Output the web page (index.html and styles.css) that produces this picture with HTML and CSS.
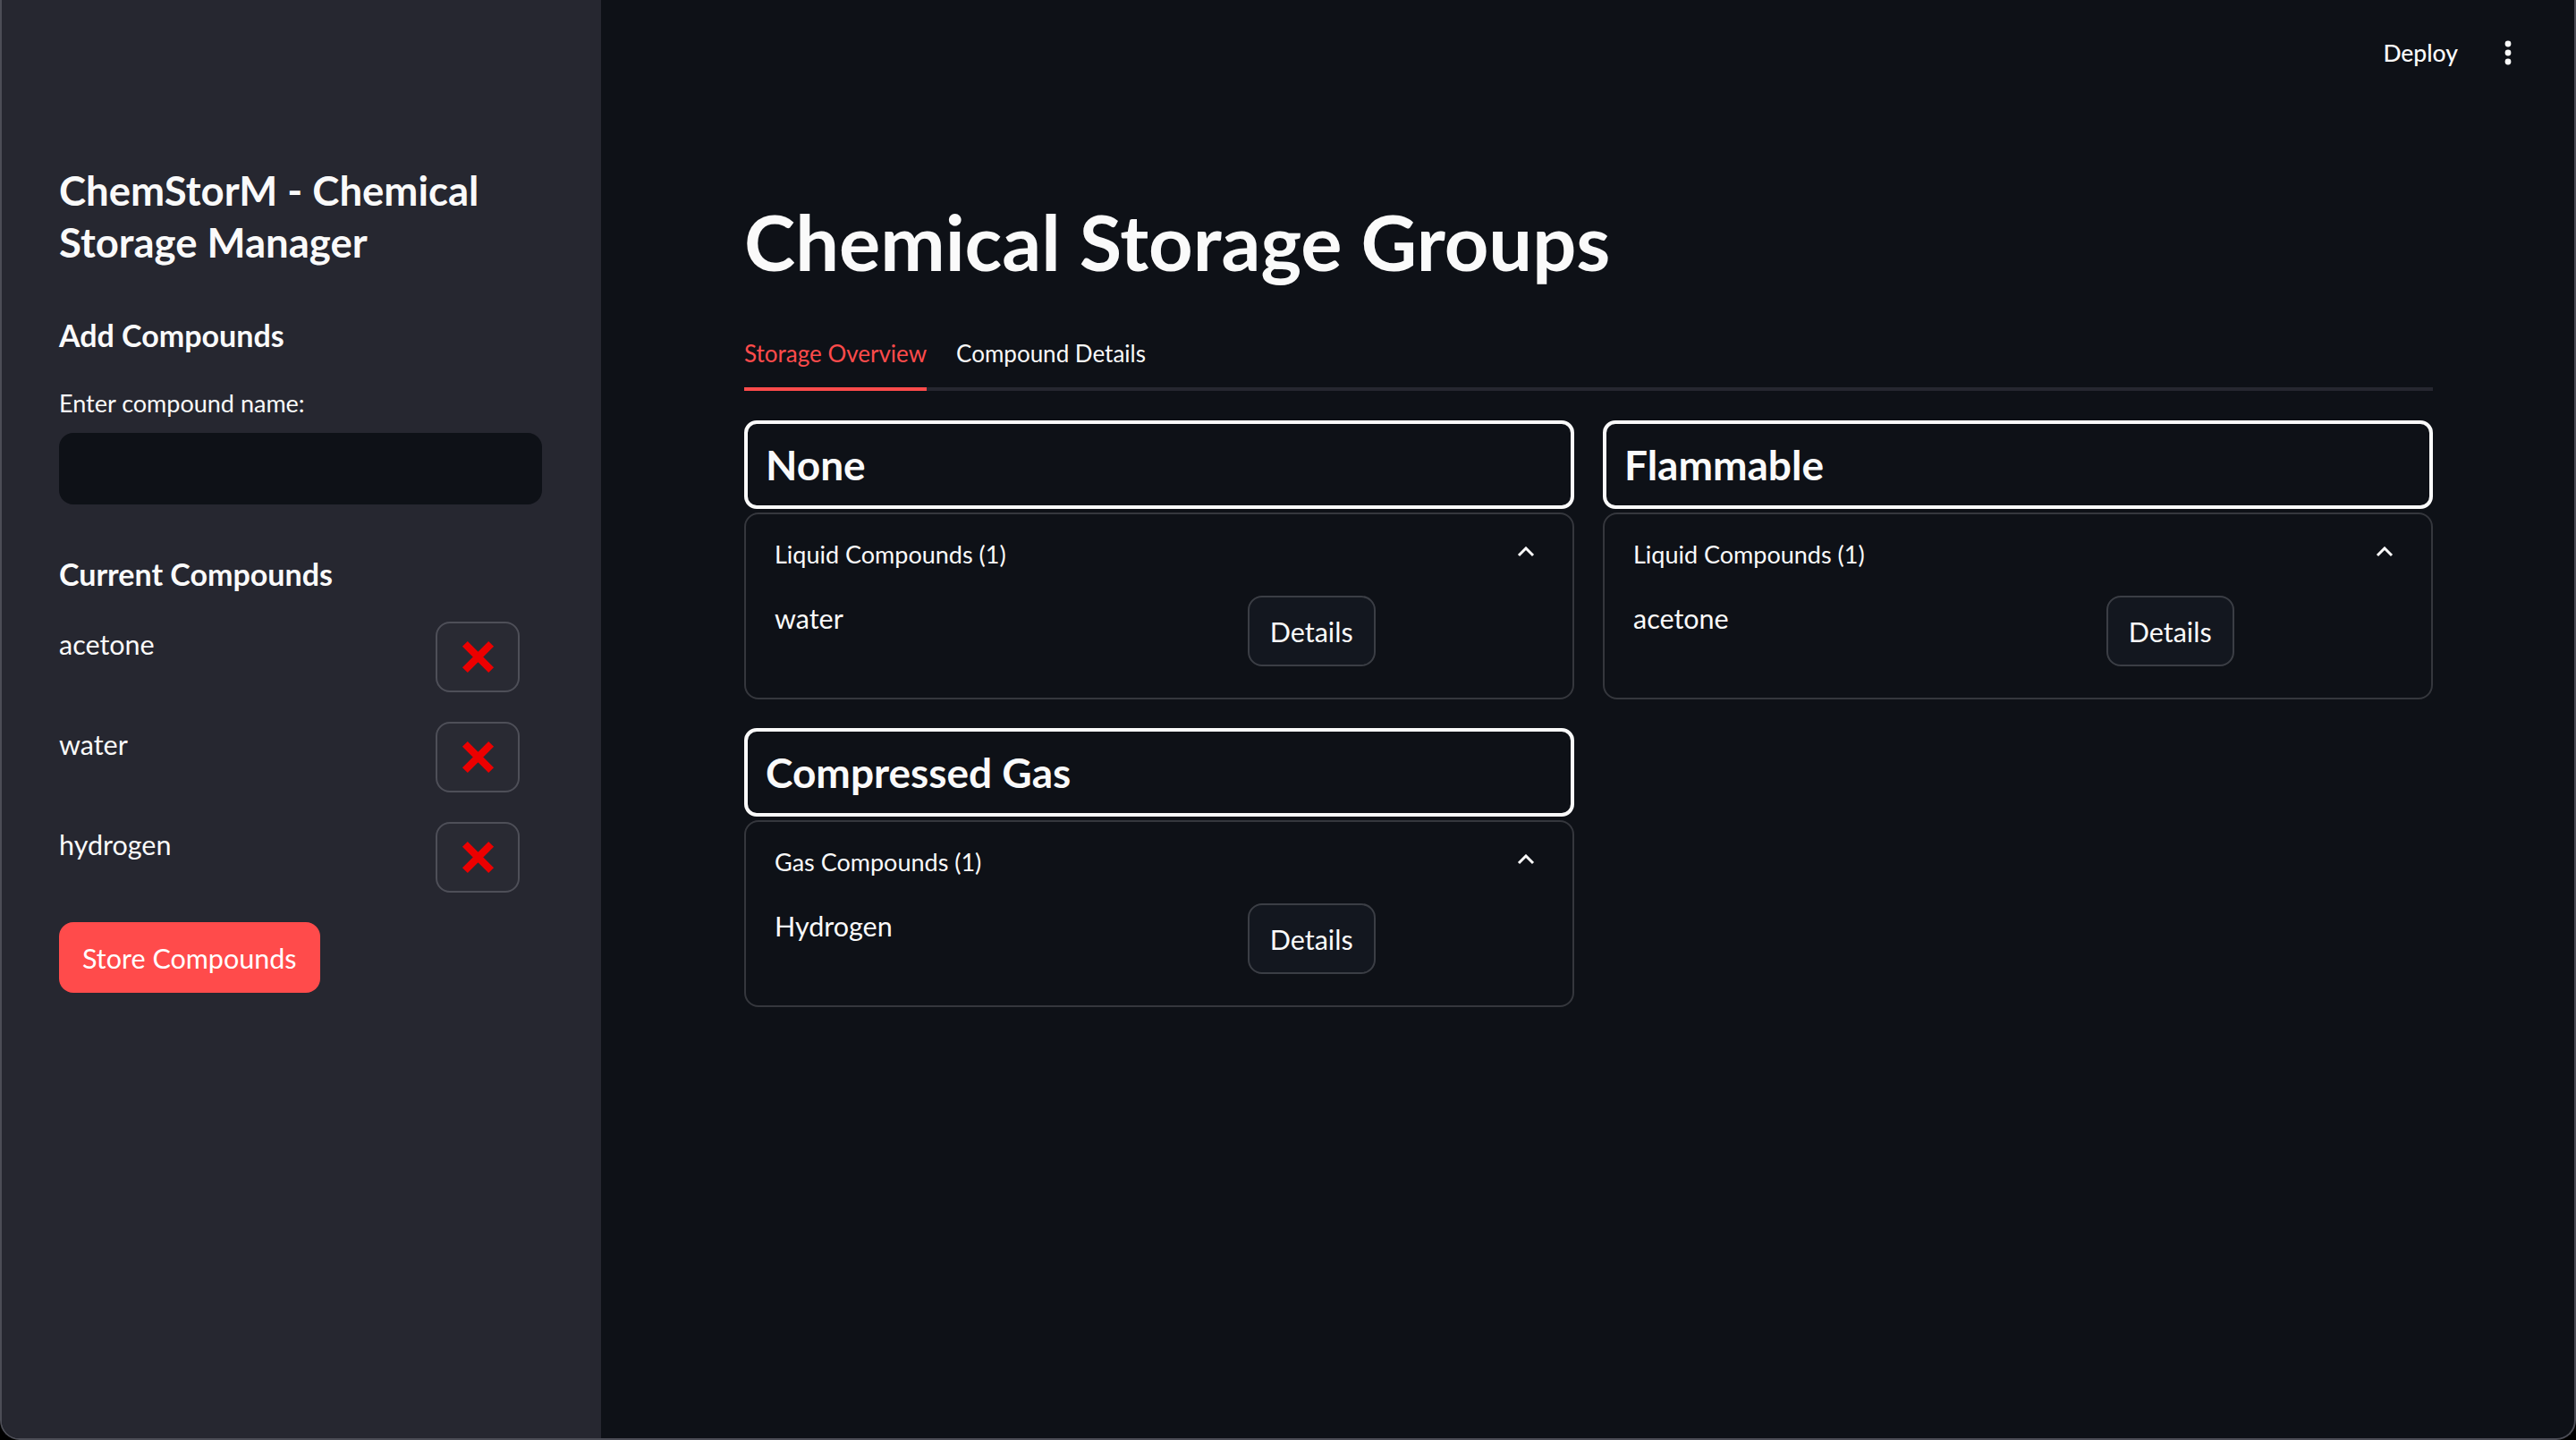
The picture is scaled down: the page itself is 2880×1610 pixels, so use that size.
FILE: index.html
```html
<!DOCTYPE html>
<html lang="en">
<head>
<meta charset="utf-8">
<title>ChemStorM - Chemical Storage Manager</title>
<link rel="stylesheet" href="styles.css">
</head>
<body>
<div class="window">
  <aside class="sidebar">
    <h1 class="side-title">ChemStorM - Chemical Storage Manager</h1>
    <h3 class="side-heading">Add Compounds</h3>
    <label class="field-label">Enter compound name:</label>
    <div class="text-input"></div>
    <h3 class="side-heading current">Current Compounds</h3>
    <div class="compound-list">
      <div class="compound-row">
        <p class="compound-name">acetone</p>
        <button class="del-btn"><svg class="x-icon" viewBox="0 0 40 40"><path d="M5 5 L35 35 M35 5 L5 35"/></svg></button>
      </div>
      <div class="compound-row">
        <p class="compound-name">water</p>
        <button class="del-btn"><svg class="x-icon" viewBox="0 0 40 40"><path d="M5 5 L35 35 M35 5 L5 35"/></svg></button>
      </div>
      <div class="compound-row">
        <p class="compound-name">hydrogen</p>
        <button class="del-btn"><svg class="x-icon" viewBox="0 0 40 40"><path d="M5 5 L35 35 M35 5 L5 35"/></svg></button>
      </div>
    </div>
    <button class="primary-btn">Store Compounds</button>
  </aside>

  <main class="main">
    <header class="topbar">
      <span class="deploy">Deploy</span>
      <svg class="kebab" viewBox="0 0 8 28"><circle cx="4" cy="4" r="3.4"/><circle cx="4" cy="14" r="3.4"/><circle cx="4" cy="24" r="3.4"/></svg>
    </header>

    <section class="content">
      <h1 class="page-title">Chemical Storage Groups</h1>
      <nav class="tabs">
        <div class="tab active">Storage Overview</div>
        <div class="tab">Compound Details</div>
      </nav>

      <div class="groups">
        <div class="group-col">
          <div class="group">
            <div class="group-head">None</div>
            <div class="expander">
              <div class="exp-summary">
                <span>Liquid Compounds (1)</span>
                <svg class="chev" viewBox="0 0 20 12"><path d="M2 10 L10 2 L18 10"/></svg>
              </div>
              <div class="exp-row">
                <p class="item-name">water</p>
                <div><button class="details-btn">Details</button></div>
              </div>
            </div>
          </div>
          <div class="group">
            <div class="group-head">Compressed Gas</div>
            <div class="expander">
              <div class="exp-summary">
                <span>Gas Compounds (1)</span>
                <svg class="chev" viewBox="0 0 20 12"><path d="M2 10 L10 2 L18 10"/></svg>
              </div>
              <div class="exp-row">
                <p class="item-name">Hydrogen</p>
                <div><button class="details-btn">Details</button></div>
              </div>
            </div>
          </div>
        </div>
        <div class="group-col">
          <div class="group">
            <div class="group-head">Flammable</div>
            <div class="expander">
              <div class="exp-summary">
                <span>Liquid Compounds (1)</span>
                <svg class="chev" viewBox="0 0 20 12"><path d="M2 10 L10 2 L18 10"/></svg>
              </div>
              <div class="exp-row">
                <p class="item-name">acetone</p>
                <div><button class="details-btn">Details</button></div>
              </div>
            </div>
          </div>
        </div>
      </div>
    </section>
  </main>
</div>
</body>
</html>
```
FILE: styles.css
```css
* { box-sizing: border-box; }

html, body {
  margin: 0;
  padding: 0;
  background: #000;
}

body {
  font-family: Lato, "Noto Sans", sans-serif;
  color: #fafafa;
}

.window {
  display: flex;
  width: 2880px;
  height: 1610px;
  border: 2px solid #4c4d56;
  border-top: none;
  border-radius: 0 0 22px 22px;
  overflow: hidden;
  background: #0e1117;
}

/* ---------- Sidebar ---------- */
.sidebar {
  width: 670px;
  flex: none;
  background: #262730;
  padding: 184px 66px 0 64px;
  display: flex;
  flex-direction: column;
}

.side-title {
  margin: 0;
  font-size: 45.5px;
  line-height: 57.6px;
  font-weight: 700;
}

.side-heading {
  margin: 54px 0 0;
  font-size: 34px;
  line-height: 43px;
  font-weight: 700;
}

.side-heading.current { margin-top: 56px; }

.field-label {
  margin-top: 32px;
  font-size: 27px;
  line-height: 45px;
}

.text-input {
  margin-top: 11px;
  height: 80px;
  border-radius: 16px;
  background: #0e1117;
}

.compound-list {
  margin-top: 32px;
  display: flex;
  flex-direction: column;
  gap: 33px;
}

.compound-row {
  display: grid;
  grid-template-columns: 1fr 119px;
  align-items: start;
}

.compound-name {
  margin: 0;
  font-size: 30.5px;
  line-height: 51px;
}

.del-btn {
  width: 94px;
  height: 79px;
  border: 2px solid #4e4f58;
  border-radius: 16px;
  background: #292a33;
  display: flex;
  align-items: center;
  justify-content: center;
  padding: 0;
}

.x-icon {
  width: 39px;
  height: 39px;
}

.x-icon path {
  stroke: #ec0000;
  stroke-width: 8.5;
  fill: none;
}

.primary-btn {
  margin-top: 33px;
  align-self: flex-start;
  height: 79px;
  padding: 0 26px;
  border: none;
  border-radius: 16px;
  background: #ff4b4b;
  color: #fff;
  font-family: inherit;
  font-size: 30.5px;
}

/* ---------- Main ---------- */
.main {
  flex: 1;
  display: flex;
  flex-direction: column;
}

.topbar {
  height: 118px;
  display: flex;
  justify-content: flex-end;
  align-items: center;
  padding-right: 70px;
  gap: 52px;
}

.deploy {
  font-size: 26.5px;
  font-weight: 500;
}

.kebab {
  width: 8px;
  height: 28px;
  fill: #fafafa;
}

.content {
  padding: 0 158px 0 160px;
}

.page-title {
  margin: 99px 0 0;
  font-size: 86.5px;
  line-height: 106px;
  font-weight: 700;
}

.tabs {
  margin-top: 33px;
  display: flex;
  gap: 33px;
  border-bottom: 4px solid #262730;
}

.tab {
  height: 81px;
  display: flex;
  align-items: center;
  font-size: 26px;
  margin-bottom: -4px;
  border-bottom: 4px solid transparent;
}

.tab.active {
  color: #ff4b4b;
  border-bottom-color: #ff4b4b;
}

.groups {
  margin-top: 33px;
  display: grid;
  grid-template-columns: 1fr 1fr;
  gap: 32px;
  align-items: start;
}

.group-col {
  display: flex;
  flex-direction: column;
  gap: 32px;
}

.group-head {
  height: 99px;
  border: 4px solid #fafafa;
  border-radius: 14px;
  padding: 0 20px;
  display: flex;
  align-items: center;
  font-size: 46px;
  font-weight: 700;
}

.expander {
  margin-top: 4px;
  border: 2px solid #35373d;
  border-radius: 16px;
  padding: 22px 32px 35px;
}

.exp-summary {
  height: 45px;
  display: flex;
  justify-content: space-between;
  align-items: center;
  font-size: 27px;
}

.chev {
  width: 20px;
  height: 12px;
  margin-right: 10px;
  margin-top: -6px;
}

.chev path {
  fill: none;
  stroke: #fafafa;
  stroke-width: 3;
}

.exp-row {
  margin-top: 24px;
  display: grid;
  grid-template-columns: 3fr 2fr;
  gap: 32px;
  align-items: start;
}

.item-name {
  margin: 0;
  font-size: 30.5px;
  line-height: 51px;
}

.details-btn {
  height: 79px;
  padding: 0 23px;
  border: 2px solid #3b3e45;
  border-radius: 16px;
  background: #13171f;
  color: #fafafa;
  font-family: inherit;
  font-size: 30.5px;
}
```
